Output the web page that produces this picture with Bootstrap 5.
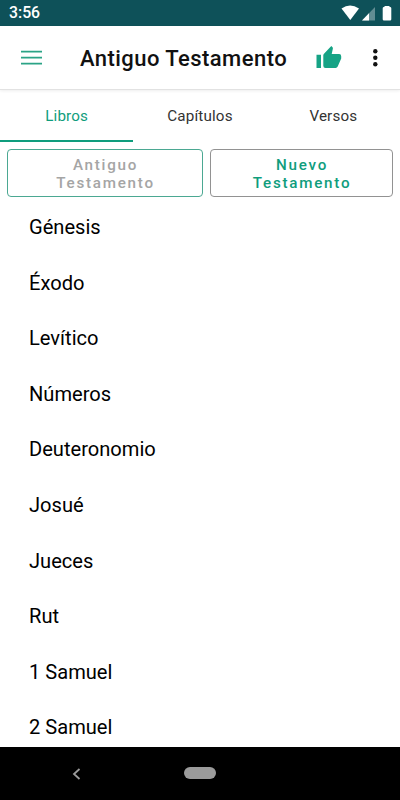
<!DOCTYPE html>
<html lang="es">
<head>
<meta charset="utf-8">
<meta name="viewport" content="width=device-width, initial-scale=1">
<title>Antiguo Testamento</title>
<link href="https://cdn.jsdelivr.net/npm/bootstrap@5.3.0/dist/css/bootstrap.min.css" rel="stylesheet">
<style>
body{font-family:Roboto,"Liberation Sans",sans-serif;color:#111;height:800px}
svg{display:block;flex:none}
.statusbar{height:26px;background:#0e5159;padding:0 8px 0 9px}
.clock{font-size:15.8px;font-weight:500;line-height:28px;letter-spacing:0}
.appbar{height:64px;padding:0 19px 0 21px;border-bottom:1px solid #e2e2e2;box-shadow:0 1px 3px rgba(0,0,0,.07)}
.app-title{font-size:22px;font-weight:490;line-height:26px;letter-spacing:.44px;margin-left:38px;padding-top:2px;color:#111}
.thumb{margin-top:-2px}
.overflow-dots{margin-left:26px}
.tabs .nav-link{height:52px;border-radius:0;font-size:15.2px;font-weight:380;line-height:52px;padding:0;color:#333;letter-spacing:.15px;border-bottom:2px solid transparent}
.tabs .nav-link.active{color:#0f9d7d;border-bottom-color:#0f9d7d}
.switcher{padding:7px 7px 0;gap:7px}
.switcher .btn{height:48px;padding:1px 0 0 1px;border-radius:4px;font-size:15.2px;font-weight:490;line-height:18px;letter-spacing:1.75px}
.btn-old{width:196px;color:#a5a5a5;border-color:#4ba892}
.btn-new{width:183px;color:#0f9d7d;border-color:#929292}
.books{padding-top:3px}
.books .list-group-item{height:55.6px;padding:0 29px;line-height:55.6px;font-size:20.1px;font-weight:385;color:#000;background:none;border:0}
.navkeys{height:53px;background:#000;margin-top:auto;padding-left:72px}
.home-pill{width:32px;height:12px;background:#9b9b9b;margin:-1px 0 0 103px}
</style>
<script src="https://cdn.jsdelivr.net/npm/bootstrap@5.3.0/dist/js/bootstrap.bundle.min.js"></script>
</head>
<body class="d-flex flex-column overflow-hidden bg-white">
<div class="statusbar d-flex align-items-center justify-content-between text-white flex-shrink-0">
  <span class="clock">3:56</span>
  <svg width="52" height="16" viewBox="340 5 52 16" fill="#fff"><path d="M341.5 8.4Q350 2.600 359 8.400L350.300 20Z"/><path d="M375 7V20.500H362Z" opacity=".35"/><path d="M369 13.200V20.500H362Z"/><path d="M384.500 6h5v1h.5q1.300 0 1.300 1.300v11q0 1.300-1.300 1.300h-6q-1.300 0-1.300-1.300v-11q0-1.300 1.300-1.300h.5z"/></svg>
</div>
<header class="appbar d-flex align-items-center flex-shrink-0">
  <svg width="21" height="16" viewBox="0 0 21 16" stroke="#2ba386" stroke-width="1.800"><path d="M0 1.600H21M0 7.600H21M0 13.600H21"/></svg>
  <h1 class="app-title mb-0 text-nowrap">Antiguo Testamento</h1>
  <svg class="thumb ms-auto" width="27" height="24" viewBox="316 45 27 24" fill="#16a385"><path d="M316.500 54.700h4.500V68h-4.500zM323.300 55.300q0-.9.700-1.600L331.300 46l1.200 1.200q.5.500.4 1.200L331.700 54h7.400q2.100 0 2.100 2.200v2.200l-3.500 8.200q-.6 1.400-2 1.400h-10.200q-2.200 0-2.200-2.200z"/></svg>
  <svg class="overflow-dots" width="12" height="20" viewBox="0 0 12 20" fill="#111"><circle cx="6.300" cy="3.300" r="2.200"/><circle cx="6.300" cy="9.800" r="2.200"/><circle cx="6.300" cy="16.300" r="2.200"/></svg>
</header>
<nav class="tabs nav nav-fill flex-nowrap flex-shrink-0">
  <a class="nav-link nav-item col-4 active" href="#">Libros</a>
  <a class="nav-link nav-item col-4" href="#">Capítulos</a>
  <a class="nav-link nav-item col-4" href="#">Versos</a>
</nav>
<div class="switcher d-flex flex-shrink-0">
  <button class="btn btn-old">Antiguo<br>Testamento</button>
  <button class="btn btn-new">Nuevo<br>Testamento</button>
</div>
<main class="books list-group list-group-flush overflow-hidden">
  <div class="list-group-item flex-shrink-0">Génesis</div>
  <div class="list-group-item flex-shrink-0">Éxodo</div>
  <div class="list-group-item flex-shrink-0">Levítico</div>
  <div class="list-group-item flex-shrink-0">Números</div>
  <div class="list-group-item flex-shrink-0">Deuteronomio</div>
  <div class="list-group-item flex-shrink-0">Josué</div>
  <div class="list-group-item flex-shrink-0">Jueces</div>
  <div class="list-group-item flex-shrink-0">Rut</div>
  <div class="list-group-item flex-shrink-0">1 Samuel</div>
  <div class="list-group-item flex-shrink-0">2 Samuel</div>
</main>
<footer class="navkeys d-flex align-items-center flex-shrink-0">
  <svg width="9" height="12" viewBox="0 0 9 12" fill="none" stroke="#9b9b9b" stroke-width="1.800"><path d="M7.500 1L2 6l5.500 5"/></svg>
  <div class="home-pill rounded-pill"></div>
</footer>
</body>
</html>
